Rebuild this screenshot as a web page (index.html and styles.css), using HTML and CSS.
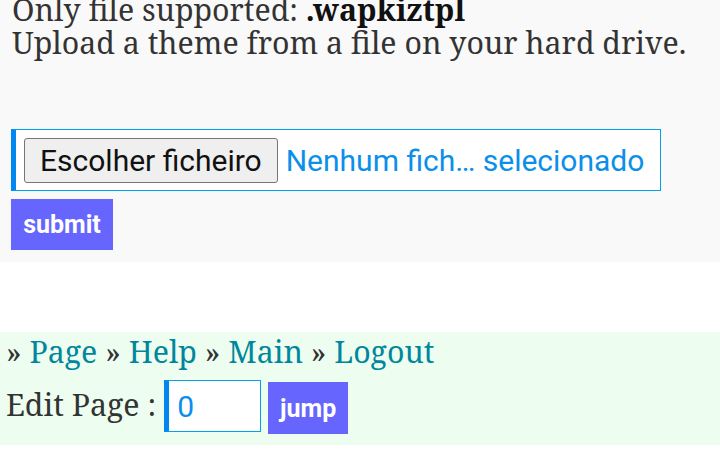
FILE: index.html
```html
<!DOCTYPE html>
<html>
<head>
<meta charset="utf-8">
<link rel="stylesheet" href="styles.css">
</head>
<body>
<div class="upload">
  <div class="info">Only file supported: <b>.wapkiztpl</b><br>Upload a theme from a file on your hard drive.</div>
  <form class="form">
    <div class="filebox"><span class="filebtn">Escolher ficheiro</span><span class="filename">Nenhum fich… selecionado</span></div>
    <button type="button" class="btn submit">submit</button>
  </form>
</div>
<div class="nav">
  <div class="crumbs">» <a href="#">Page</a> » <a href="#">Help</a> » <a href="#">Main</a> » <a href="#">Logout</a></div>
  <div class="jumprow"><span class="label">Edit Page :</span><input class="pageinput" type="text" value="0"><button type="button" class="btn jump">jump</button></div>
</div>
</body>
</html>
```
FILE: styles.css
```css
html, body { margin: 0; padding: 0; background: #fff; }
body { font-family: "Noto Serif", "DejaVu Serif", serif; color: #333; }
.upload { background: #f9f9f9; padding: 0 0 12px 12px; margin-top: -7px; }
.info { font-size: 30.3px; line-height: 33px; }
.info b { color: #111; }
.form { margin-top: 70px; display: flex; flex-direction: column; align-items: flex-start; gap: 8px; }
.filebox { display: flex; align-items: center; background: #fff; border: 1px solid #00a2ee; border-left: 5px solid #0088ee; box-sizing: border-box; height: 62px; padding: 0 16px 0 8px; margin-left: -1px; }
.filebtn { font-family: Roboto, sans-serif; font-size: 30px; color: #111; background: #efefef; border: 1px solid #767676; border-radius: 3px; padding: 0 15px; height: 45px; line-height: 43px; box-sizing: border-box; }
.filename { font-family: Roboto, sans-serif; font-size: 30px; color: #0b8fe9; margin-left: 8px; }
.btn { font-family: Roboto, sans-serif; font-weight: bold; color: #fff; background: #6666ff; border: 0; margin: 0; cursor: pointer; }
.submit { font-size: 25px; width: 102px; height: 51px; margin-left: -1px; }
.nav { background: #edfdef; margin-top: 70px; padding: 0 6px 11px; }
.crumbs { font-size: 30.3px; line-height: 40px; }
.crumbs a { color: #00879d; text-decoration: none; }
.jumprow { display: flex; align-items: flex-start; margin-top: 8px; }
.label { font-size: 30.3px; margin-right: 8px; margin-top: 4px; }
.pageinput { font-family: Roboto, sans-serif; font-size: 30px; color: #0b8fe9; width: 97px; height: 52px; box-sizing: border-box; border: 1px solid #00a2ee; border-left: 5px solid #0088ee; padding: 0 8px; background: #fff; outline: none; margin: 0; }
.jump { font-size: 25px; width: 80px; height: 52px; margin-left: 7px; margin-top: 2px; }
```
